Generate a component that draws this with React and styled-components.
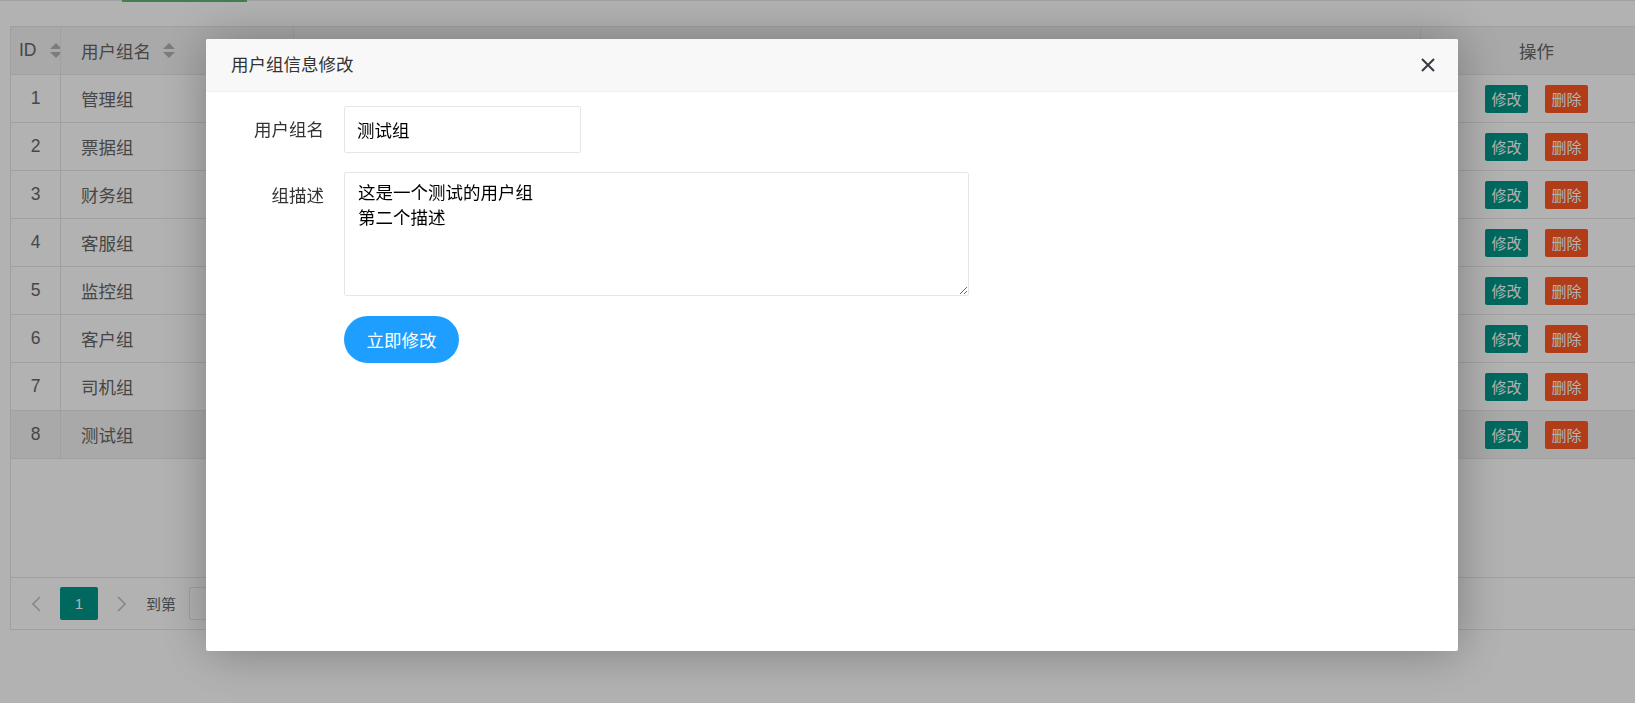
import React from 'react';
import styled, { createGlobalStyle } from 'styled-components';

const GlobalStyle = createGlobalStyle`
  html, body {
    margin: 0;
    padding: 0;
    background: #fff;
    overflow: hidden;
  }
  body {
    font-family: "Liberation Sans", "Noto Sans CJK SC", sans-serif;
    color: #666;
  }
  * {
    box-sizing: border-box;
  }
`;

const Page = styled.div`
  width: 1635px;
  height: 703px;
`;

const TabBar = styled.div`
  display: flex;
  height: 1px;
  padding-left: 122px;
  background: #e6e6e6;
  margin-bottom: 25px;
`;

const ActiveTab = styled.div`
  width: 125px;
  height: 2px;
  background: #5fb878;
`;

const TableBox = styled.div`
  margin-left: 10px;
  width: 1643px;
  border: 1px solid #e6e6e6;
  font-size: 17.5px;
`;

const Row = styled.div`
  display: grid;
  grid-template-columns: 50px 233px 1127px 232px;
  height: 48px;
  border-bottom: 1px solid #e6e6e6;
  background: ${p => (p.$shaded ? '#f2f2f2' : '#fff')};
`;

const Cell = styled.div`
  display: flex;
  align-items: center;
  justify-content: ${p => p.$align || 'flex-start'};
  padding: ${p => p.$pad || '0 20px'};
  border-right: 1px solid #e6e6e6;
  color: #666;
  white-space: nowrap;
  overflow: hidden;
`;

const SortIcon = styled.span`
  display: inline-flex;
  flex-direction: column;
  justify-content: space-between;
  height: 15px;
  margin-left: ${p => p.$gap || 12}px;

  &::before,
  &::after {
    content: '';
    width: 0;
    height: 0;
    border-left: 6px solid transparent;
    border-right: 6px solid transparent;
  }
  &::before {
    border-bottom: 6px solid #b2b2b2;
  }
  &::after {
    border-top: 6px solid #b2b2b2;
  }
`;

const OpButton = styled.span`
  display: inline-flex;
  align-items: center;
  justify-content: center;
  height: 28px;
  padding: 0 6.5px;
  border-radius: 2px;
  font-size: 15px;
  color: #fff;
  background: ${p => (p.$danger ? '#ff5722' : '#009688')};
`;

const OpGroup = styled.div`
  display: flex;
  gap: 17px;
`;

const EmptyArea = styled.div`
  height: 118px;
`;

const Pager = styled.div`
  display: flex;
  align-items: center;
  height: 52px;
  padding-left: 21px;
  border-top: 1px solid #e6e6e6;
  font-size: 15px;
  color: #666;
`;

const PageArrow = styled.svg`
  width: 9px;
  height: 16px;
  margin-right: ${p => p.$mr}px;
`;

const CurrentPage = styled.span`
  display: inline-flex;
  align-items: center;
  justify-content: center;
  width: 38px;
  height: 33px;
  border-radius: 2px;
  background: #009688;
  color: #fff;
  margin-right: 19px;
`;

const JumpLabel = styled.span`
  margin-right: 13px;
`;

const JumpInput = styled.span`
  display: inline-block;
  width: 60px;
  height: 33px;
  border: 1px solid #e6e6e6;
  border-radius: 2px;
`;

const Shade = styled.div`
  position: fixed;
  inset: 0;
  background: rgba(0, 0, 0, 0.3);
`;

const Modal = styled.div`
  position: fixed;
  left: 206px;
  top: 39px;
  width: 1252px;
  height: 612px;
  background: #fff;
  border-radius: 2px;
  box-shadow: 1px 1px 50px rgba(0, 0, 0, 0.3);
  display: flex;
  flex-direction: column;
  font-family: "Liberation Sans", "Noto Sans CJK SC", sans-serif;
`;

const ModalTitle = styled.div`
  display: flex;
  align-items: center;
  justify-content: space-between;
  height: 53px;
  padding: 0 22px 0 25px;
  background: #f8f8f8;
  border-bottom: 1px solid #f0f0f0;
  border-radius: 2px 2px 0 0;
  font-size: 17.5px;
  color: #333;
`;

const TitleText = styled.span`
  padding-bottom: 3px;
`;

const CloseIcon = styled.svg`
  width: 16px;
  height: 16px;
`;

const Form = styled.div`
  padding-top: 14px;
  display: flex;
  flex-direction: column;
`;

const FormRow = styled.div`
  display: grid;
  grid-template-columns: 118px auto;
  column-gap: 20px;
  justify-content: start;
  margin-bottom: ${p => p.$mb || 19}px;
`;

const Label = styled.label`
  text-align: right;
  padding: 11.5px 0;
  line-height: 24px;
  font-size: 17.5px;
  color: #333;
`;

const TextInput = styled.input`
  width: 237px;
  height: 47px;
  padding: 0 12px;
  border: 1px solid #e6e6e6;
  border-radius: 2px;
  font: inherit;
  font-size: 17.5px;
  color: #000;
  outline: none;
`;

const TextArea = styled.textarea`
  width: 625px;
  height: 124px;
  padding: 8px 13px;
  border: 1px solid #e6e6e6;
  border-radius: 2px;
  font: inherit;
  font-size: 17.5px;
  line-height: 25px;
  color: #000;
  outline: none;
`;

const SubmitButton = styled.button`
  width: 115px;
  height: 47px;
  border: none;
  border-radius: 24px;
  background: #1e9fff;
  color: #fff;
  font: inherit;
  font-size: 17.5px;
  cursor: pointer;
`;

const groups = ['管理组', '票据组', '财务组', '客服组', '监控组', '客户组', '司机组', '测试组'];

export default function App() {
  return (
    <Page>
      <GlobalStyle />
      <TabBar>
        <ActiveTab />
      </TabBar>
      <TableBox>
        <Row $shaded>
          <Cell $pad="0 0 0 8px">
            ID<SortIcon $gap={13} />
          </Cell>
          <Cell>
            用户组名<SortIcon />
          </Cell>
          <Cell />
          <Cell $align="center" $pad="0">操作</Cell>
        </Row>
        {groups.map((name, i) => (
          <Row key={name} $shaded={i === groups.length - 1}>
            <Cell $align="center" $pad="0">{i + 1}</Cell>
            <Cell>{name}</Cell>
            <Cell />
            <Cell $align="center" $pad="0">
              <OpGroup>
                <OpButton>修改</OpButton>
                <OpButton $danger>删除</OpButton>
              </OpGroup>
            </Cell>
          </Row>
        ))}
        <EmptyArea />
        <Pager>
          <PageArrow viewBox="0 0 9 16" $mr={19}>
            <path d="M8 1 L1 8 L8 15" fill="none" stroke="#c2c2c2" strokeWidth="1.6" />
          </PageArrow>
          <CurrentPage>1</CurrentPage>
          <PageArrow viewBox="0 0 9 16" $mr={20}>
            <path d="M1 1 L8 8 L1 15" fill="none" stroke="#c2c2c2" strokeWidth="1.6" />
          </PageArrow>
          <JumpLabel>到第</JumpLabel>
          <JumpInput />
        </Pager>
      </TableBox>

      <Shade />
      <Modal>
        <ModalTitle>
          <TitleText>用户组信息修改</TitleText>
          <CloseIcon viewBox="0 0 16 16">
            <path d="M2 2 L14 14 M14 2 L2 14" stroke="#3a3a44" strokeWidth="2" fill="none" />
          </CloseIcon>
        </ModalTitle>
        <Form>
          <FormRow>
            <Label>用户组名</Label>
            <TextInput defaultValue="测试组" />
          </FormRow>
          <FormRow $mb={20}>
            <Label>组描述</Label>
            <TextArea defaultValue={'这是一个测试的用户组\n第二个描述'} />
          </FormRow>
          <FormRow>
            <span />
            <SubmitButton>立即修改</SubmitButton>
          </FormRow>
        </Form>
      </Modal>
    </Page>
  );
}
